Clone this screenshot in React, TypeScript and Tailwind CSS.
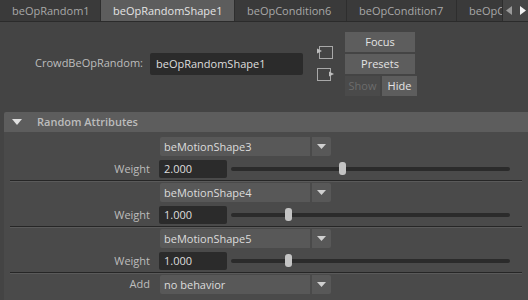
import React from 'react'

const font = { fontFamily: '"Open Sans", "Liberation Sans", sans-serif' }

const tabs = [
  { name: 'beOpRandom1', w: 'w-[101px]' },
  { name: 'beOpRandomShape1', w: 'w-[134px]', active: true },
  { name: 'beOpCondition6', w: 'w-[112px]' },
  { name: 'beOpCondition7', w: 'w-[110px]' },
  { name: 'beOpCondition8', w: 'w-[46px]' },
]

const behaviors = [
  { shape: 'beMotionShape3', weight: 2 },
  { shape: 'beMotionShape4', weight: 1 },
  { shape: 'beMotionShape5', weight: 1 },
]

function Dropdown({ value }: { value: string }) {
  return (
    <div className="flex h-[19px] gap-[2px]">
      <div className="w-[150px] rounded-l-[2px] bg-[#585858] pl-[4px] text-[11px] leading-[19px] text-[#dcdcdc]">
        {value}
      </div>
      <div className="flex w-[19px] items-center justify-center rounded-r-[2px] bg-[#585858]">
        <svg width="9" height="5" viewBox="0 0 9 5">
          <path d="M0 0h9L4.5 5z" fill="#d0d0d0" />
        </svg>
      </div>
    </div>
  )
}

function Slider({ value }: { value: number }) {
  return (
    <div className="relative ml-[4px] h-[18px] w-[279px]">
      <div className="absolute left-0 right-0 top-[7px] h-[4px] rounded-full bg-[#2b2b2b]" />
      <div
        className="absolute top-[2px] h-[13px] w-[7px] rounded-[3px] bg-[#c4c4c4]"
        style={{ left: `${Math.round((value / 5) * 271)}px` }}
      />
    </div>
  )
}

function Separator() {
  return <div className="mx-[6px] h-[2px] border-t border-[#262626] bg-[#5a5a5a]" />
}

export default function App() {
  return (
    <div className="h-[300px] w-[528px] overflow-hidden bg-[#444444] select-none" style={font}>
      {/* Tab bar */}
      <div className="flex h-[22px] border-b border-[#2b2b2b] bg-[#3a3a3a]">
        {tabs.map((t) => (
          <div
            key={t.name}
            className={`${t.w} shrink-0 overflow-hidden whitespace-nowrap border-r border-[#2e2e2e] pl-[12px] text-[11px] leading-[21px] ${
              t.active ? 'bg-[#5d5d5d] text-[#e4e4e4]' : 'text-[#a8a8a8]'
            }`}
          >
            {t.name}
          </div>
        ))}
        <div className="flex flex-1 items-center justify-center gap-[8px] bg-[#464646]">
          <svg width="6" height="9" viewBox="0 0 6 9">
            <path d="M6 0v9L0 4.5z" fill="#9a9a9a" />
          </svg>
          <svg width="6" height="9" viewBox="0 0 6 9">
            <path d="M0 0v9l6-4.5z" fill="#f0f0f0" />
          </svg>
        </div>
      </div>

      {/* Node header */}
      <div className="flex h-[83px] items-center">
        <div className="w-[143px] text-right text-[11px] text-[#bdbdbd]">CrowdBeOpRandom:</div>
        <div className="ml-[7px] h-[22px] w-[153px] rounded-[2px] bg-[#2b2b2b] pl-[6px] text-[11px] leading-[22px] text-[#dedede]">
          beOpRandomShape1
        </div>
        <div className="ml-[14px] flex flex-col gap-[9px]">
          <svg width="17" height="13" viewBox="0 0 17 13">
            <rect x="2.5" y="0.5" width="13" height="12" fill="none" stroke="#a8a8a8" />
            <path d="M0 2.5v5l5-2.5z" fill="#bdbdbd" />
          </svg>
          <svg width="17" height="13" viewBox="0 0 17 13">
            <rect x="0.5" y="0.5" width="13" height="12" fill="none" stroke="#a8a8a8" />
            <path d="M12 3.5v5l5-2.5z" fill="#bdbdbd" />
          </svg>
        </div>
        <div className="ml-[11px] flex w-[72px] flex-col gap-[2px] text-[11px]">
          <div className="h-[20px] w-[70px] bg-[#5d5d5d] text-center leading-[20px] text-[#e4e4e4]">Focus</div>
          <div className="h-[20px] w-[70px] bg-[#5d5d5d] text-center leading-[20px] text-[#e4e4e4]">Presets</div>
          <div className="flex gap-[2px]">
            <div className="h-[20px] w-[35px] bg-[#4a4a4a] text-center leading-[20px] text-[#6c6c6c]">Show</div>
            <div className="h-[20px] w-[35px] bg-[#5d5d5d] text-center leading-[20px] text-[#e4e4e4]">Hide</div>
          </div>
        </div>
      </div>

      {/* Random Attributes frame */}
      <div className="ml-[4px] mt-[7px]">
        <div className="flex h-[20px] items-center rounded-tl-[2px] bg-[#5d5d5d]">
          <svg className="ml-[8px]" width="10" height="6" viewBox="0 0 10 6">
            <path d="M0 0h10L5 6z" fill="#e0e0e0" />
          </svg>
          <span className="ml-[15px] text-[11px] font-semibold text-[#bcbcbc]">Random Attributes</span>
        </div>
        <div className="h-[200px] bg-[#4a4a4a] pt-[5px]">
          {behaviors.map((b) => (
            <div key={b.shape}>
              <div className="flex">
                <div className="w-[146px]" />
                <div className="ml-[10px]">
                  <Dropdown value={b.shape} />
                </div>
              </div>
              <div className="mt-[4px] flex h-[18px] items-center">
                <div className="w-[146px] text-right text-[11px] text-[#bdbdbd]">Weight</div>
                <div className="ml-[9px] h-[18px] w-[68px] rounded-[2px] bg-[#2b2b2b] pl-[5px] text-[11px] leading-[18px] text-[#dedede]">
                  {b.weight.toFixed(3)}
                </div>
                <Slider value={b.weight} />
              </div>
              <div className="mt-[2px] mb-[1px]">
                <Separator />
              </div>
            </div>
          ))}
          <div className="flex items-center">
            <div className="w-[146px] text-right text-[11px] text-[#bdbdbd]">Add</div>
            <div className="ml-[10px]">
              <Dropdown value="no behavior" />
            </div>
          </div>
        </div>
      </div>
    </div>
  )
}
